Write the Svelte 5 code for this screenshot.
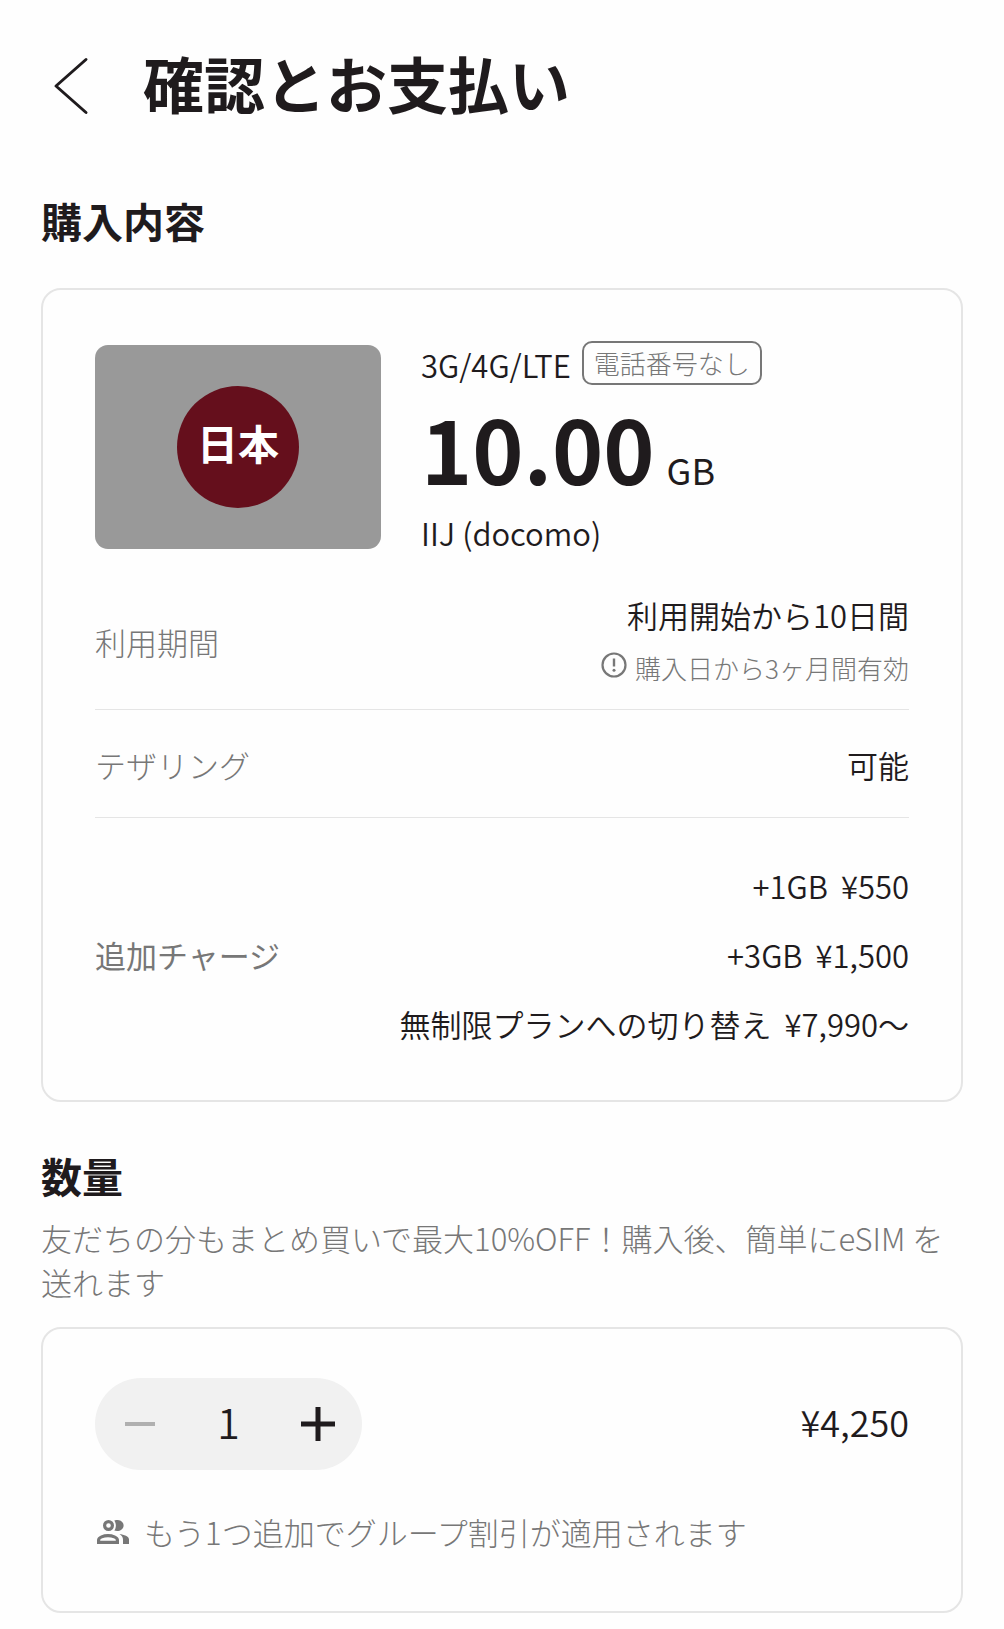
<script>
  const charges = [
    { name: '+1GB', price: '¥550' },
    { name: '+3GB', price: '¥1,500' },
    { name: '無制限プランへの切り替え', price: '¥7,990〜' },
  ];
  const unitPrice = 4250;
  let quantity = $state(1);
  let total = $derived('¥' + (unitPrice * quantity).toLocaleString('en-US'));
</script>

<main class="page" lang="ja">
  <header class="header">
    <button class="back" type="button" aria-label="戻る">
      <svg viewBox="0 0 36 64" width="36" height="64" fill="none" stroke="currentColor" stroke-width="3" stroke-linecap="round" stroke-linejoin="round">
        <path d="M33 5.500L3 32L33 58.500" />
      </svg>
    </button>
    <h1>確認とお支払い</h1>
  </header>

  <section class="purchase">
    <h2>購入内容</h2>
    <div class="card plan">
      <div class="summary">
        <div class="flag"><span class="sun">日本</span></div>
        <div class="spec">
          <div class="network">
            <span class="bands">3G/4G/LTE</span>
            <span class="badge">電話番号なし</span>
          </div>
          <div class="amount"><strong>10.00</strong><span>GB</span></div>
          <div class="carrier">IIJ (docomo)</div>
        </div>
      </div>
      <dl class="details">
        <div class="row period">
          <dt>利用期間</dt>
          <dd>
            <span>利用開始から10日間</span>
            <span class="note">
              <svg viewBox="0 0 26 26" width="26" height="26" aria-hidden="true">
                <circle cx="13" cy="13" r="11.500" fill="none" stroke="currentColor" stroke-width="2.200" />
                <path d="M13 6.500V14.500" stroke="currentColor" stroke-width="2.400" />
                <circle cx="13" cy="18.300" r="1.500" fill="currentColor" />
              </svg>
              購入日から3ヶ月間有効
            </span>
          </dd>
        </div>
        <div class="row tethering">
          <dt>テザリング</dt>
          <dd>可能</dd>
        </div>
        <div class="row charge">
          <dt>追加チャージ</dt>
          <dd>
            {#each charges as charge}
              <span class="option"><span>{charge.name}</span><span>{charge.price}</span></span>
            {/each}
          </dd>
        </div>
      </dl>
    </div>
  </section>

  <section class="quantity">
    <h2>数量</h2>
    <p class="lead">友だちの分もまとめ買いで最大10%OFF！購入後、簡単にeSIM を送れます</p>
    <div class="card order">
      <div class="order-row">
        <div class="stepper" role="group" aria-label="数量">
          <button type="button" aria-label="減らす" disabled={quantity <= 1} onclick={() => (quantity -= 1)}>
            <svg viewBox="0 0 36 36" width="36" height="36"><path d="M3 18H33" stroke="currentColor" stroke-width="4" /></svg>
          </button>
          <output>{quantity}</output>
          <button type="button" aria-label="増やす" onclick={() => (quantity += 1)}>
            <svg viewBox="0 0 36 36" width="36" height="36"><path d="M1 18H35M18 1V35" stroke="currentColor" stroke-width="5" /></svg>
          </button>
        </div>
        <span class="total">{total}</span>
      </div>
      <p class="group">
        <svg viewBox="0 0 32 24" width="32" height="24" fill="none" stroke="currentColor" stroke-width="3.200" aria-hidden="true">
          <circle cx="11.500" cy="5.500" r="3.900" />
          <path d="M1.600 22.400V20C1.600 17.500 6.500 15.600 11 15.600S20.400 17.500 20.400 20V22.400Z" />
          <path d="M17.300 0.400C21.500 -1 26.600 1 26.600 5.500S21.500 12 17.300 10.600C19.400 7.500 19.400 3.500 17.300 0.400Z" fill="currentColor" stroke="none" />
          <path d="M22.500 14.100C27 14.600 32 16.500 32 19.500V24H26V19.800C26 17.500 24.800 15.600 22.500 14.100Z" fill="currentColor" stroke="none" />
        </svg>
        もう1つ追加でグループ割引が適用されます
      </p>
    </div>
  </section>
</main>

<style>
  :global(body) {
    background: #fefefe;
  }
  .page {
    box-sizing: border-box;
    padding: 48px 41px 16px;
    font-family: 'Noto Sans CJK JP', sans-serif;
    font-size: 31px;
    line-height: 44px;
    font-weight: 350;
    color: #1f1b1d;
  }
  h1, h2, p, dl, dd {
    margin: 0;
  }
  button {
    display: flex;
    align-items: center;
    justify-content: center;
    padding: 0;
    border: 0;
    background: none;
    color: inherit;
    font: inherit;
  }
  svg {
    display: block;
    flex: none;
  }
  .header {
    display: flex;
    align-items: flex-end;
    gap: 54px;
    padding-left: 12px;
  }
  h1 {
    font-size: 61px;
    line-height: 70px;
    font-weight: 700;
  }
  h2 {
    font-size: 41px;
    line-height: 56px;
    font-weight: 700;
  }
  .purchase {
    margin-top: 74px;
  }
  .card {
    border: 2px solid #e5e5e5;
    border-radius: 20px;
  }
  .plan {
    margin-top: 40px;
    padding: 51px 52px 54px;
  }
  .summary {
    display: flex;
    align-items: center;
    gap: 40px;
  }
  .flag {
    display: flex;
    align-items: center;
    justify-content: center;
    flex: none;
    width: 286px;
    height: 204px;
    border-radius: 13px;
    background: #999;
  }
  .sun {
    width: 122px;
    padding-bottom: 10px;
    border-radius: 50%;
    background: #650f1c;
    color: #fff;
    font-size: 41px;
    line-height: 112px;
    font-weight: 700;
    text-align: center;
  }
  .spec {
    display: flex;
    flex-direction: column;
    gap: 18px;
  }
  .network {
    display: flex;
    align-items: center;
    gap: 11px;
  }
  .bands,
  .carrier {
    padding-top: 4px;
    line-height: 40px;
  }
  .badge {
    padding: 0 10px;
    border: 2px solid #777;
    border-radius: 10px;
    color: #777;
    font-size: 26px;
    line-height: 40px;
    font-weight: 300;
  }
  .amount {
    display: flex;
    align-items: baseline;
    gap: 12px;
  }
  .amount strong {
    font-size: 87px;
    line-height: 88px;
    font-weight: 700;
  }
  .amount span {
    font-size: 36px;
    font-weight: 400;
  }
  .details {
    margin-top: 40px;
  }
  .row {
    display: flex;
    align-items: center;
    justify-content: space-between;
    border-bottom: 1px solid #e5e5e5;
  }
  dt,
  .note,
  .lead,
  .group {
    color: #777;
    font-weight: 300;
  }
  dd {
    display: flex;
    flex-direction: column;
    align-items: flex-end;
  }
  .period {
    padding-bottom: 19px;
  }
  .period dd {
    gap: 9px;
  }
  .note {
    display: flex;
    align-items: flex-start;
    gap: 8px;
    font-size: 26px;
  }
  .note svg {
    margin-top: 6px;
  }
  .tethering {
    padding: 33px 0 30px;
  }
  .charge {
    padding-top: 46px;
    border-bottom: 0;
  }
  .charge dt {
    font-weight: 400;
  }
  .charge dd {
    gap: 25px;
  }
  .option {
    display: flex;
    gap: 13px;
  }
  .quantity {
    margin-top: 45px;
  }
  .lead {
    margin-top: 13px;
  }
  .order {
    margin-top: 23px;
    padding: 49px 52px 57px;
  }
  .order-row {
    display: flex;
    align-items: center;
    justify-content: space-between;
  }
  .stepper {
    display: grid;
    grid-template-columns: repeat(3, 89px);
    height: 92px;
    border-radius: 46px;
    background: #f1f1f1;
  }
  .stepper button:disabled {
    color: #b0b0b0;
  }
  output {
    font-size: 41px;
    line-height: 86px;
    text-align: center;
  }
  .total {
    padding-bottom: 6px;
    font-size: 36px;
  }
  .group {
    display: flex;
    align-items: center;
    gap: 15px;
    margin-top: 40px;
    padding-left: 2px;
  }
</style>
